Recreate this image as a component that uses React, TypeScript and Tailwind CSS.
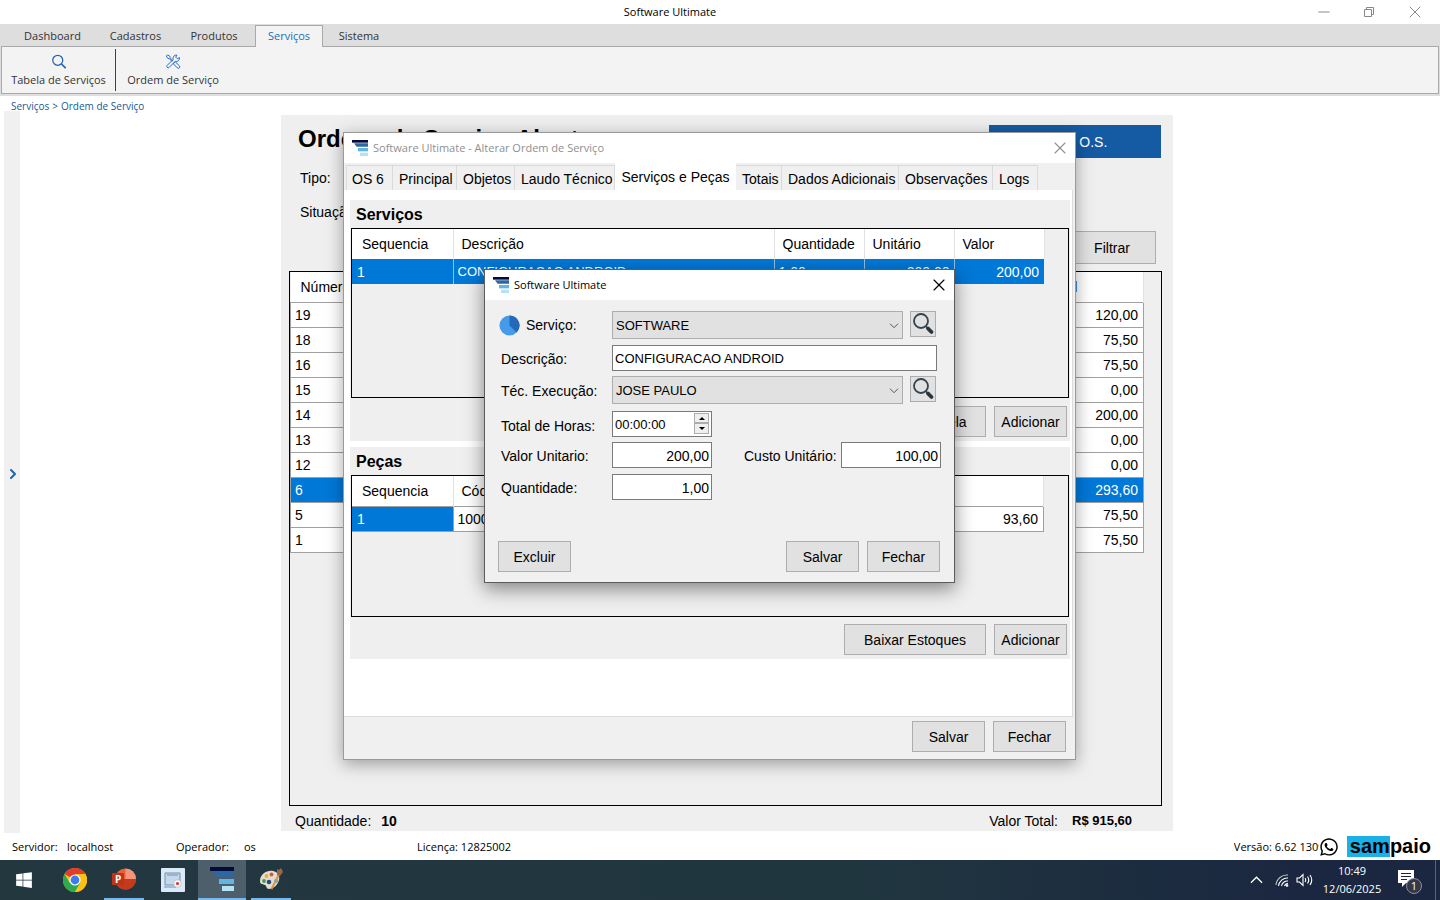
import type { ReactNode } from 'react';
import { ChevronRight, Minus, X } from 'lucide-react';
import { FaWhatsapp, FaWindows } from 'react-icons/fa';

const menu = [
  { label: 'Dashboard', width: 'w-[85px]' },
  { label: 'Cadastros', width: 'w-[81px]' },
  { label: 'Produtos', width: 'w-[76px]' },
  { label: 'Serviços', width: 'w-[68px]' },
  { label: 'Sistema', width: 'w-[72px]' },
];

const orders = [
  { id: '19', total: '120,00' },
  { id: '18', total: '75,50' },
  { id: '16', total: '75,50' },
  { id: '15', total: '0,00' },
  { id: '14', total: '200,00' },
  { id: '13', total: '0,00' },
  { id: '12', total: '0,00' },
  { id: '6', total: '293,60' },
  { id: '5', total: '75,50' },
  { id: '1', total: '75,50' },
];

const tabs = [
  { label: 'OS 6', width: 'w-[47px]' },
  { label: 'Principal', width: 'w-[64px]' },
  { label: 'Objetos', width: 'w-[58px]' },
  { label: 'Laudo Técnico', width: 'w-[100px]' },
  { label: 'Serviços e Peças', width: 'w-[121px]' },
  { label: 'Totais', width: 'w-[46px]' },
  { label: 'Dados Adicionais', width: 'w-[117px]' },
  { label: 'Observações', width: 'w-[94px]' },
  { label: 'Logs', width: 'w-[45px]' },
];

function Logo({ className }: { className: string }) {
  return (
    <svg viewBox="0 0 24 24" className={className} aria-hidden="true">
      <rect x="0" y="0" width="24" height="4" fill="#020b3c" />
      <path d="M3 5h21v5H7z" fill="#2f66a0" />
      <rect x="9" y="12" width="15" height="5" fill="#63b4e0" />
      <rect x="12" y="19" width="12" height="5" fill="#b5e2f5" />
    </svg>
  );
}

function Lens() {
  return (
    <svg viewBox="0 0 24 24" className="size-6" fill="none" aria-hidden="true">
      <circle cx="10" cy="9" r="7" stroke="#34434f" strokeWidth="1.8" />
      <path d="M14.500 14l2.500 2.500" stroke="#34434f" strokeWidth="1.6" />
      <path d="M17 16.500l3.500 3.500" stroke="#2b3238" strokeWidth="3.8" strokeLinecap="round" />
    </svg>
  );
}

function ToolsIcon() {
  return (
    <svg viewBox="0 0 18 18" className="size-[18px]" fill="none" stroke="#2a6ac8" strokeWidth="1.2" strokeLinejoin="round" aria-hidden="true">
      <path d="M1 2.500L2.500 1l3 2v1.600l3.200 3.200-1 1L4.600 5.500H3z" />
      <path d="M10.500 10.200l1.300-.7 4.800 4.600a1.700 1.700 0 0 1-2.500 2.500l-4.600-4.800z" />
      <path d="M16.700 4.300l-2.500 1.400-1.900-1.900 1.400-2.500a4 4 0 0 0-4.500 5.200L2 13.700a1.700 1.700 0 0 0 2.400 2.400l7.200-7.200a4 4 0 0 0 5.100-4.600z" />
    </svg>
  );
}

function Button({ children, className = '' }: { children: ReactNode; className?: string }) {
  return (
    <button type="button" className={`h-[31px] border border-[#adadad] bg-[#e1e1e1] text-center whitespace-nowrap ${className}`}>
      {children}
    </button>
  );
}

function ServiceTable() {
  return (
    <table className="w-[692px] table-fixed border-collapse">
      <colgroup>
        <col className="w-[101px]" />
        <col className="w-[321px]" />
        <col className="w-[90px]" />
        <col className="w-[90px]" />
        <col className="w-[90px]" />
      </colgroup>
      <thead>
        <tr className="h-[30px] bg-white text-left">
          {['Sequencia', 'Descrição', 'Quantidade', 'Unitário', 'Valor'].map((h) => (
            <th key={h} className="border-r border-[#e2e2e2] pl-2 font-normal first:pl-[10px]">{h}</th>
          ))}
        </tr>
      </thead>
      <tbody>
        <tr className="h-[25px] bg-[#0078d7] text-white">
          <td className="border-r border-[#8fbfe8] pl-[5px]">1</td>
          <td className="border-r border-[#8fbfe8] pl-1 text-[13px]">CONFIGURACAO ANDROID</td>
          <td className="border-r border-[#8fbfe8] pl-1">1,00</td>
          <td className="border-r border-[#8fbfe8] pr-1 text-right">200,00</td>
          <td className="pr-[5px] text-right">200,00</td>
        </tr>
      </tbody>
    </table>
  );
}

function PartsTable() {
  return (
    <table className="w-[692px] table-fixed border-collapse">
      <colgroup>
        <col className="w-[101px]" />
        <col className="w-[100px]" />
        <col />
        <col className="w-[90px]" />
      </colgroup>
      <thead>
        <tr className="h-[30px] border-b border-[#a0a0a0] bg-white text-left">
          {['Sequencia', 'Código', 'Descrição'].map((h) => (
            <th key={h} className="border-r border-[#e2e2e2] pl-2 font-normal first:pl-[10px]">{h}</th>
          ))}
          <th className="border-r border-[#e2e2e2]" />
        </tr>
      </thead>
      <tbody>
        <tr className="h-[25px] border-b border-[#a0a0a0] bg-white">
          <td className="border-r border-[#a0a0a0] bg-[#0078d7] pl-[5px] text-white">1</td>
          <td className="border-r border-[#a0a0a0] pl-1">1000</td>
          <td className="border-r border-[#a0a0a0] pl-1" />
          <td className="border-r border-[#a0a0a0] pr-[5px] text-right">93,60</td>
        </tr>
      </tbody>
    </table>
  );
}

function OrderWindow() {
  return (
    <section className="absolute top-[132px] left-[343px] flex h-[628px] w-[733px] flex-col border border-[#9a9a9a] bg-[#f0f0f0] shadow-[0_4px_16px_rgba(0,0,0,0.35)]">
      <header className="flex h-[30px] shrink-0 items-center bg-white pr-[5px] pl-2 font-['Open_Sans',sans-serif] text-[11px] text-[#8f8f8f]">
        <Logo className="mr-[5px] size-4" />
        <span>Software Ultimate - Alterar Ordem de Serviço</span>
        <button type="button" aria-label="Fechar janela" className="ml-auto">
          <X className="size-5" strokeWidth={1.3} />
        </button>
      </header>
      <div role="tablist" className="flex h-[27px] shrink-0 items-end pl-[2px]">
        {tabs.map((t) => {
          const active = t.label === 'Serviços e Peças';
          return (
            <button
              key={t.label}
              type="button"
              role="tab"
              aria-selected={active}
              className={`shrink-0 whitespace-nowrap ${t.width} ${active ? 'h-[27px] bg-white text-center' : 'h-[25px] border-t border-r border-[#dadada] pt-[2px] pl-[6px] text-left first:border-l first:pl-[5px]'}`}
            >
              {t.label}
            </button>
          );
        })}
      </div>
      <div className="mr-[2px] flex flex-1 flex-col gap-[6px] border-r border-b border-[#dcdcdc] bg-white pt-[10px] pr-[2px] pl-[6px]">
        <section className="bg-[#efefef] pb-1">
          <h2 className="flex h-7 items-center pt-px pl-[6px] text-[16px] font-bold">Serviços</h2>
          <div className="mr-px ml-px h-[170px] border border-black">
            <ServiceTable />
          </div>
          <div className="flex justify-end gap-2 pt-2 pr-[3px]">
            <Button className="w-[142px]">Adicionar Tabela</Button>
            <Button className="w-[73px]">Adicionar</Button>
          </div>
        </section>
        <section className="bg-[#efefef] pb-1">
          <h2 className="flex h-7 items-center pt-px pl-[6px] text-[16px] font-bold">Peças</h2>
          <div className="mr-px ml-px h-[142px] border border-black">
            <PartsTable />
          </div>
          <div className="flex justify-end gap-2 pt-[7px] pr-[3px]">
            <Button className="w-[142px]">Baixar Estoques</Button>
            <Button className="w-[73px]">Adicionar</Button>
          </div>
        </section>
      </div>
      <footer className="flex h-[42px] shrink-0 items-start justify-end gap-2 pt-1 pr-[9px]">
        <Button className="w-[73px]">Salvar</Button>
        <Button className="w-[73px]">Fechar</Button>
      </footer>
    </section>
  );
}

function Select({ id, value }: { id: string; value: string }) {
  return (
    <div className="relative w-[291px]">
      <select id={id} defaultValue={value} className="h-7 w-full appearance-none border border-[#adadad] bg-[#e1e1e1] pt-px pl-[3px] text-[13px]">
        <option>{value}</option>
      </select>
      <svg viewBox="0 0 10 6" className="pointer-events-none absolute top-3 right-1 h-[6px] w-[10px]" fill="none" stroke="#555" aria-hidden="true">
        <path d="M1 .7l4 4 4-4" />
      </svg>
    </div>
  );
}

function LensButton({ label }: { label: string }) {
  return (
    <button type="button" aria-label={label} className="ml-[7px] flex size-[26px] items-center justify-center border border-[#adadad] bg-[#e1e1e1]">
      <Lens />
    </button>
  );
}

const field = 'h-[26px] border border-[#7a7a7a] bg-white pt-px px-[2px]';

function ServiceWindow() {
  return (
    <section className="absolute top-[269px] left-[484px] flex h-[314px] w-[471px] flex-col border border-[#5c5c5c] bg-[#f0f0f0] shadow-[0_6px_18px_rgba(0,0,0,0.45)]">
      <header className="flex h-[30px] shrink-0 items-center bg-white pr-[5px] pl-2 font-['Open_Sans',sans-serif] text-[11px]">
        <Logo className="mr-[5px] size-4" />
        <span>Software Ultimate</span>
        <button type="button" aria-label="Fechar janela" className="ml-auto">
          <X className="size-5" strokeWidth={1.4} />
        </button>
      </header>
      <form className="flex flex-1 flex-col pt-[11px] pl-4">
        <div className="mb-[6px] flex h-7 items-start">
          <label htmlFor="servico" className="flex h-7 w-[111px] items-center">
            <svg viewBox="0 0 22 22" className="mr-[6px] -ml-[2px] size-[21px]" aria-hidden="true">
              <circle cx="11" cy="11" r="10.500" fill="#459bea" />
              <path d="M11 11V.5A10.500 10.500 0 0 1 18.500 18.300z" fill="#2469b8" />
            </svg>
            Serviço:
          </label>
          <Select id="servico" value="SOFTWARE" />
          <LensButton label="Buscar serviço" />
        </div>
        <div className="mb-[5px] flex items-center">
          <label htmlFor="descricao" className="w-[111px] pt-[2px]">Descrição:</label>
          <input id="descricao" defaultValue="CONFIGURACAO ANDROID" className={`w-[325px] text-[13px] ${field}`} />
        </div>
        <div className="mb-[7px] flex h-7 items-start">
          <label htmlFor="tecnico" className="flex h-7 w-[111px] items-center pt-[2px]">Téc. Execução:</label>
          <Select id="tecnico" value="JOSE PAULO" />
          <LensButton label="Buscar técnico" />
        </div>
        <div className="mb-[5px] flex items-center">
          <label htmlFor="horas" className="w-[111px] pt-1">Total de Horas:</label>
          <div className="relative flex">
            <input id="horas" defaultValue="00:00:00" className={`w-[100px] text-[13px] ${field}`} />
            <div className="absolute top-[2px] right-[3px] flex flex-col">
              <button type="button" aria-label="Aumentar" className="flex h-[10px] w-[15px] items-center justify-center border border-[#adadad] bg-[#efefef]">
                <svg viewBox="0 0 6 3" className="h-[3px] w-[6px]"><path d="M0 3l3-3 3 3z" /></svg>
              </button>
              <button type="button" aria-label="Diminuir" className="flex h-[11px] w-[15px] items-center justify-center border border-[#adadad] bg-[#efefef]">
                <svg viewBox="0 0 6 3" className="h-[3px] w-[6px]"><path d="M0 0h6L3 3z" /></svg>
              </button>
            </div>
          </div>
        </div>
        <div className="mb-[6px] flex items-center">
          <label htmlFor="valor" className="w-[111px] pt-[2px]">Valor Unitario:</label>
          <input id="valor" defaultValue="200,00" className={`w-[100px] text-right ${field}`} />
          <label htmlFor="custo" className="ml-8 w-[97px] pt-[2px]">Custo Unitário:</label>
          <input id="custo" defaultValue="100,00" className={`w-[100px] text-right ${field}`} />
        </div>
        <div className="flex items-center">
          <label htmlFor="quantidade" className="w-[111px] pt-[2px]">Quantidade:</label>
          <input id="quantidade" defaultValue="1,00" className={`w-[100px] text-right ${field}`} />
        </div>
        <div className="mt-auto mr-[14px] mb-[10px] -ml-[3px] flex gap-2">
          <Button className="w-[73px]">Excluir</Button>
          <Button className="ml-auto w-[73px]">Salvar</Button>
          <Button className="w-[73px]">Fechar</Button>
        </div>
      </form>
    </section>
  );
}

function OrdersPanel() {
  return (
    <main className="mx-auto mt-1 mb-[2px] flex w-[892px] flex-col bg-[#efefef] px-2">
      <div className="flex items-start justify-between pt-[10px] pr-1 pl-[9px]">
        <h1 className="text-[24px] leading-7 font-bold">Ordens de Serviço Abertas</h1>
        <button type="button" className="h-[33px] w-[172px] bg-[#145ba4] text-white">Nova O.S.</button>
      </div>
      <p className="mt-[10px] ml-[11px]">Tipo:</p>
      <p className="mt-[14px] ml-[11px]">Situação:</p>
      <div className="mt-[9px] mr-[9px] flex justify-end">
        <button type="button" className="h-[33px] w-[88px] border border-[#adadad] bg-[#e1e1e1]">Filtrar</button>
      </div>
      <div className="mt-[7px] mr-[3px] flex-1 border border-black">
        <table className="w-[854px] table-fixed border-collapse">
          <colgroup>
            <col className="w-[100px]" />
            <col />
            <col className="w-[143px]" />
          </colgroup>
          <thead>
            <tr className="h-[30px] border-b border-[#a0a0a0] bg-white text-left">
              <th className="pl-[10px] font-normal">Número</th>
              <th />
              <th className="border-r border-[#e2e2e2] pl-3 font-normal">Valor Total</th>
            </tr>
          </thead>
          <tbody>
            {orders.map((o) => (
              <tr key={o.id} className={`h-[25px] border border-[#a0a0a0] ${o.id === '6' ? 'bg-[#0078d7] text-white' : 'bg-white'}`}>
                <td className="pl-1">{o.id}</td>
                <td />
                <td className="pr-[5px] text-right">{o.total}</td>
              </tr>
            ))}
          </tbody>
        </table>
      </div>
      <div className="flex h-[25px] items-center pt-[5px] pl-[6px]">
        <span>Quantidade:</span>
        <b className="ml-[10px]">10</b>
        <span className="ml-auto">Valor Total:</span>
        <b className="mr-[33px] ml-[14px] text-[13px]">R$ 915,60</b>
      </div>
    </main>
  );
}

function Taskbar() {
  return (
    <nav className="flex h-10 shrink-0 items-stretch bg-linear-to-r from-[#23373f] via-[#20363f] via-60% to-[#1b2740] to-90% font-['Open_Sans',sans-serif] text-[11px] text-white">
      <button type="button" aria-label="Iniciar" className="flex w-12 items-center justify-center">
        <FaWindows className="size-[18px]" />
      </button>
      <button type="button" aria-label="Chrome" className="flex w-[54px] items-center justify-center">
        <svg viewBox="0 0 24 24" className="size-6">
          <circle cx="12" cy="12" r="12" fill="#fbc116" />
          <path d="M12 12L1.600 6A12 12 0 0 1 22.400 6z" fill="#e33b2e" />
          <path d="M1.600 6A12 12 0 0 0 12 24l5.200-9L12 12 6.800 15z" fill="#2da94f" />
          <path d="M12 6h10.400A12 12 0 0 1 12 24l5.200-9z" fill="#fbc116" />
          <circle cx="12" cy="12" r="5.600" fill="#fff" />
          <circle cx="12" cy="12" r="4.400" fill="#3b7ded" />
        </svg>
      </button>
      <button type="button" aria-label="PowerPoint" className="mx-[2px] flex w-10 items-center justify-center border-b-2 border-[#76b9ed]">
        <svg viewBox="0 0 24 24" className="size-6">
          <circle cx="13.500" cy="12" r="10.500" fill="#e8613c" />
          <path d="M13.500 1.500A10.500 10.500 0 0 1 24 12H13.500z" fill="#f69479" />
          <path d="M3 12h21A10.500 10.500 0 0 1 3 12z" fill="#c53a1c" />
          <rect x="0" y="6" width="12" height="12" rx="1" fill="#bd3518" />
          <text x="3" y="15.500" fontSize="10" fontWeight="700" fill="#fff">P</text>
        </svg>
      </button>
      <button type="button" aria-label="Gravador" className="flex w-[54px] items-center justify-center">
        <svg viewBox="0 0 24 24" className="size-6">
          <rect width="24" height="24" rx="1" fill="#dce9f7" />
          <path d="M4 5h15v12H4z" fill="#c5d8ea" stroke="#6f8fae" />
          <path d="M6 7h11M3 19h12" fill="none" stroke="#6f8fae" />
          <circle cx="16.500" cy="15.500" r="3.800" fill="#f5f5f5" stroke="#aab7c4" strokeWidth=".6" />
          <circle cx="16.500" cy="15.500" r="1.600" fill="#dd3535" />
        </svg>
      </button>
      <button type="button" aria-label="Software Ultimate" className="-ml-[2px] flex w-12 items-center justify-center border-b-2 border-[#76b9ed] bg-[#4c5f6b]">
        <Logo className="size-6" />
      </button>
      <button type="button" aria-label="Paint" className="ml-[5px] flex w-10 items-center justify-center border-b-2 border-[#76b9ed]">
        <svg viewBox="0 0 24 24" className="size-6">
          <path d="M1 14C1 7 8 3 14 4c5 1 7 5 6 9-1 5-6 9-10 9-3 0-2-3-4-4-2-.6-5-.5-5-4z" fill="#e5ddcf" />
          <circle cx="5" cy="14" r="1.900" fill="#3f9b57" />
          <circle cx="7.500" cy="9" r="1.900" fill="#e6b12c" />
          <circle cx="12.500" cy="7.500" r="1.900" fill="#d95b35" />
          <circle cx="10" cy="15" r="2.300" fill="#254a82" />
          <circle cx="17" cy="14" r="2" fill="#4aa3dc" />
          <path d="M19 7l2 1-8 15-1-2z" fill="#d39547" />
          <path d="M18 2l2 1 2-2 2 4-3 4-3-1z" fill="#96684c" />
        </svg>
      </button>
      <div className="ml-auto flex items-center">
        <svg viewBox="0 0 14 8" className="mr-3 h-2 w-[13px]" fill="none" stroke="#fff" strokeWidth="1.4" aria-hidden="true">
          <path d="M1 7l6-6 6 6" />
        </svg>
        <svg viewBox="0 0 14 14" className="mr-[7px] size-[14px]" fill="none" stroke="#fff" strokeWidth="1.1" aria-hidden="true">
          <path d="M1 12A11 11 0 0 1 13 2" opacity=".7" />
          <path d="M3.500 13A9 9 0 0 1 13 5M6.500 13A6 6 0 0 1 13 8M9.500 13A3.500 3.500 0 0 1 13 10.500" />
          <circle cx="12" cy="12.500" r=".8" fill="#fff" />
        </svg>
        <svg viewBox="0 0 18 14" className="h-[14px] w-[18px]" fill="none" stroke="#fff" strokeWidth="1.1" aria-hidden="true">
          <path d="M1 5h2.500L7 1.500v11L3.500 9H1z" />
          <path d="M9 5q1.500 2 0 4M11.500 3.500q2.500 3.500 0 7M14 2q3.500 5 0 10" />
        </svg>
        <div className="ml-2 w-[60px] text-center leading-[18px]">
          <div>10:49</div>
          <div>12/06/2025</div>
        </div>
        <svg viewBox="0 0 25 26" className="mt-1 mr-3 ml-4 h-[26px] w-[25px]" aria-hidden="true">
          <path d="M0 1h16v13H8l-4 4v-4H0z" fill="#fff" />
          <path d="M3 4.500h10M3 7.500h10M3 10.500h6" stroke="#1b2740" />
          <circle cx="16" cy="17" r="7.500" fill="#34394a" stroke="#8b8f99" />
          <text x="16" y="21" fontSize="11" textAnchor="middle" fill="#fff">1</text>
        </svg>
        <div className="h-10 w-[5px] border-l border-[#5b6577]" />
      </div>
    </nav>
  );
}

export default function App() {
  return (
    <div className="relative flex h-screen flex-col overflow-hidden bg-white font-['Liberation_Sans',Arial,sans-serif] text-[14px] leading-5 text-black">
      <header className="relative flex h-6 shrink-0 items-center justify-center font-['Open_Sans',sans-serif] text-[11px]">
        <span className="mr-[100px]">Software Ultimate</span>
        <div className="absolute right-[15px] flex items-center gap-[29px] text-[#888]">
          <button type="button" aria-label="Minimizar"><Minus className="size-[18px]" strokeWidth={1.3} /></button>
          <button type="button" aria-label="Restaurar">
            <svg viewBox="0 0 14 14" className="size-[14px]" fill="none" stroke="currentColor">
              <path d="M2.500 4.500h7v7h-7zM4.500 4.500v-2h7v7h-2" />
            </svg>
          </button>
          <button type="button" aria-label="Fechar"><X className="size-5" strokeWidth={1.2} /></button>
        </div>
      </header>
      <nav className="flex h-[22px] shrink-0 items-end bg-[#dedede] pl-[10px] font-['Open_Sans',sans-serif] text-[11px] text-[#333]">
        {menu.map((m) => (
          <button
            key={m.label}
            type="button"
            className={`relative z-10 shrink-0 text-center ${m.width} ${m.label === 'Serviços' ? '-mb-px ml-[3px] h-[22px] border border-b-0 border-[#a9a9a9] bg-[#f3f3f3] pb-px text-[#1c6cb8]' : 'h-[21px]'}`}
          >
            {m.label}
          </button>
        ))}
      </nav>
      <div className="shrink-0 bg-[#dedede] px-px pb-[2px] font-['Open_Sans',sans-serif] text-[11px] text-[#333]">
        <div className="flex h-12 items-center border border-[#a9a9a9] bg-[#f3f3f3]">
          <button type="button" className="flex h-[42px] w-[114px] flex-col items-center border-r border-[#23486f] pt-[5px]">
            <svg viewBox="0 0 18 18" className="size-[18px]" fill="none" stroke="#2362b4" strokeWidth="1.500" aria-hidden="true">
              <circle cx="7.500" cy="7.500" r="6" />
              <path d="M12 12l5 5" strokeWidth="2" />
            </svg>
            <span className="leading-[22px]">Tabela de Serviços</span>
          </button>
          <button type="button" className="flex h-[42px] w-[114px] flex-col items-center pt-[5px]">
            <ToolsIcon />
            <span className="leading-[22px]">Ordem de Serviço</span>
          </button>
        </div>
      </div>
      <div className="flex h-[15px] shrink-0 items-center gap-[3px] pt-[5px] pl-[11px] font-['Open_Sans',sans-serif] text-[10px] text-[#185a94]">
        <a href="#servicos">Serviços</a>
        <span>&gt;</span>
        <a href="#ordem">Ordem de Serviço</a>
      </div>
      <div className="flex min-h-0 flex-1 pr-[6px] pl-1">
        <aside className="flex w-4 shrink-0 items-center justify-center bg-[#f0f0f0] pt-[3px] pl-[2px]">
          <button type="button" aria-label="Expandir menu">
            <ChevronRight className="size-4 text-[#1766b5]" strokeWidth={3} />
          </button>
        </aside>
        <OrdersPanel />
      </div>
      <footer className="flex h-[27px] shrink-0 items-center pl-3 font-['Open_Sans',sans-serif] text-[11px]">
        <span className="w-[55px]">Servidor:</span>
        <span className="w-[109px]">localhost</span>
        <span className="w-[68px]">Operador:</span>
        <span className="w-[173px]">os</span>
        <span>Licença: 12825002</span>
        <span className="ml-auto w-[85px] overflow-hidden whitespace-nowrap">Versão: 6.62 1309</span>
        <FaWhatsapp className="mr-2 size-5" />
        <span className="mr-[9px] flex items-center font-['Liberation_Sans',Arial,sans-serif] text-[20px] leading-[21px] font-bold">
          <span className="bg-[#19b1e8] pl-[3px]">sam</span>paio
        </span>
      </footer>
      <Taskbar />
      <OrderWindow />
      <ServiceWindow />
    </div>
  );
}
